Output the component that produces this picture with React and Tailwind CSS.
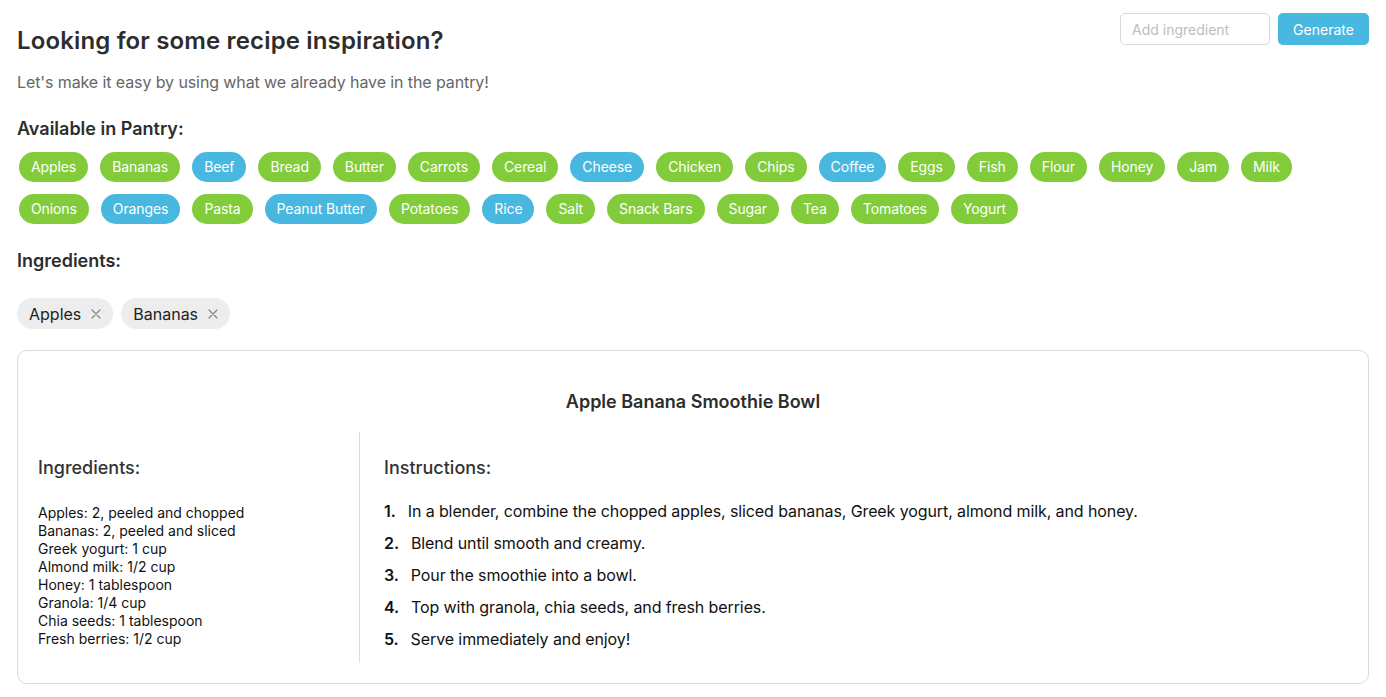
import React from "react";

const row1 = [
  ["Apples", "g"], ["Bananas", "g"], ["Beef", "b"], ["Bread", "g"], ["Butter", "g"], ["Carrots", "g"],
  ["Cereal", "g"], ["Cheese", "b"], ["Chicken", "g"], ["Chips", "g"], ["Coffee", "b"], ["Eggs", "g"],
  ["Fish", "g"], ["Flour", "g"], ["Honey", "g"], ["Jam", "g"], ["Milk", "g"],
];
const row2 = [
  ["Onions", "g"], ["Oranges", "b"], ["Pasta", "g"], ["Peanut Butter", "b"], ["Potatoes", "g"], ["Rice", "b"],
  ["Salt", "g"], ["Snack Bars", "g"], ["Sugar", "g"], ["Tea", "g"], ["Tomatoes", "g"], ["Yogurt", "g"],
];

const ingredients = [
  "Apples: 2, peeled and chopped",
  "Bananas: 2, peeled and sliced",
  "Greek yogurt: 1 cup",
  "Almond milk: 1/2 cup",
  "Honey: 1 tablespoon",
  "Granola: 1/4 cup",
  "Chia seeds: 1 tablespoon",
  "Fresh berries: 1/2 cup",
];

const steps = [
  "In a blender, combine the chopped apples, sliced bananas, Greek yogurt, almond milk, and honey.",
  "Blend until smooth and creamy.",
  "Pour the smoothie into a bowl.",
  "Top with granola, chia seeds, and fresh berries.",
  "Serve immediately and enjoy!",
];

function Pill({ name, c }) {
  return (
    <span
      className={
        "inline-flex items-center h-[30px] px-3 rounded-full text-white text-[14px] leading-none tracking-[-0.1px] " +
        (c === "b" ? "bg-[#48b8e0]" : "bg-[#82cc3b]")
      }
    >
      {name}
    </span>
  );
}

function Chip({ name }) {
  return (
    <span className="inline-flex items-center h-[31px] pl-3 pr-[12px] gap-[10px] rounded-full bg-[#ededed] text-[#222] text-[16px]">
      {name}
      <svg width="10" height="10" viewBox="0 0 10 10" className="mt-[1px]">
        <path d="M1 1L9 9M9 1L1 9" stroke="#888" strokeWidth="1.3" strokeLinecap="round" />
      </svg>
    </span>
  );
}

export default function App() {
  return (
    <div className="min-h-screen bg-white text-[#333] px-[17px] pt-[13px] pb-[12px]" style={{ fontFamily: "Inter, 'Noto Sans', sans-serif" }}>
      <div className="flex items-start justify-between">
        <div className="pt-[13px]">
          <h1 className="text-[24px] leading-[30px] font-semibold text-[#2d2d2d] tracking-[0.15px]">Looking for some recipe inspiration?</h1>
          <p className="mt-[16px] text-[16px] leading-[20px] text-[#666] tracking-[-0.1px]">Let's make it easy by using what we already have in the pantry!</p>
        </div>
        <div className="flex items-center gap-2">
          <input
            placeholder="Add ingredient"
            className="w-[150px] h-[32px] rounded-[5px] border border-[#d9d9d9] px-[11px] text-[14px] text-[#333] placeholder:text-[#bdbdbd] outline-none"
          />
          <button className="h-[32px] w-[91px] rounded-[5px] bg-[#48b8e0] text-white text-[14px]">Generate</button>
        </div>
      </div>

      <h2 className="mt-[25px] text-[18px] leading-[24px] font-semibold text-[#2d2d2d]">Available in Pantry:</h2>
      <div className="mt-[11px] pl-[2px] flex flex-col gap-3">
        <div className="flex gap-3">
          {row1.map(([n, c]) => <Pill key={n} name={n} c={c} />)}
        </div>
        <div className="flex gap-3">
          {row2.map(([n, c]) => <Pill key={n} name={n} c={c} />)}
        </div>
      </div>

      <h2 className="mt-[25px] text-[18px] leading-[24px] font-semibold text-[#2d2d2d]">Ingredients:</h2>
      <div className="mt-[25px] flex gap-2">
        <Chip name="Apples" />
        <Chip name="Bananas" />
      </div>

      <div className="mt-[21px] border border-[#dcdcdc] rounded-[10px] px-5 pt-5 pb-[20px]">
        <h3 className="py-5 text-center text-[18px] leading-[21px] font-semibold text-[#2d2d2d]">Apple Banana Smoothie Bowl</h3>
        <div className="flex">
          <div className="w-[322px] border-r border-[#dcdcdc] pt-6 pb-[15px]">
            <h4 className="text-[18px] leading-[24px] font-medium text-[#333]">Ingredients:</h4>
            <ul className="mt-6 text-[14px] leading-[18px] text-[#111]">
              {ingredients.map((i) => <li key={i}>{i}</li>)}
            </ul>
          </div>
          <div className="flex-1 pl-6 pt-6">
            <h4 className="text-[18px] leading-[24px] font-medium text-[#333]">Instructions:</h4>
            <ol className="mt-[15px] text-[16px] leading-[32px] text-[#111] tracking-[-0.1px]">
              {steps.map((s, i) => (
                <li key={i} className="flex gap-3">
                  <span className="font-semibold">{i + 1}.</span>
                  <span>{s}</span>
                </li>
              ))}
            </ol>
          </div>
        </div>
      </div>
    </div>
  );
}
